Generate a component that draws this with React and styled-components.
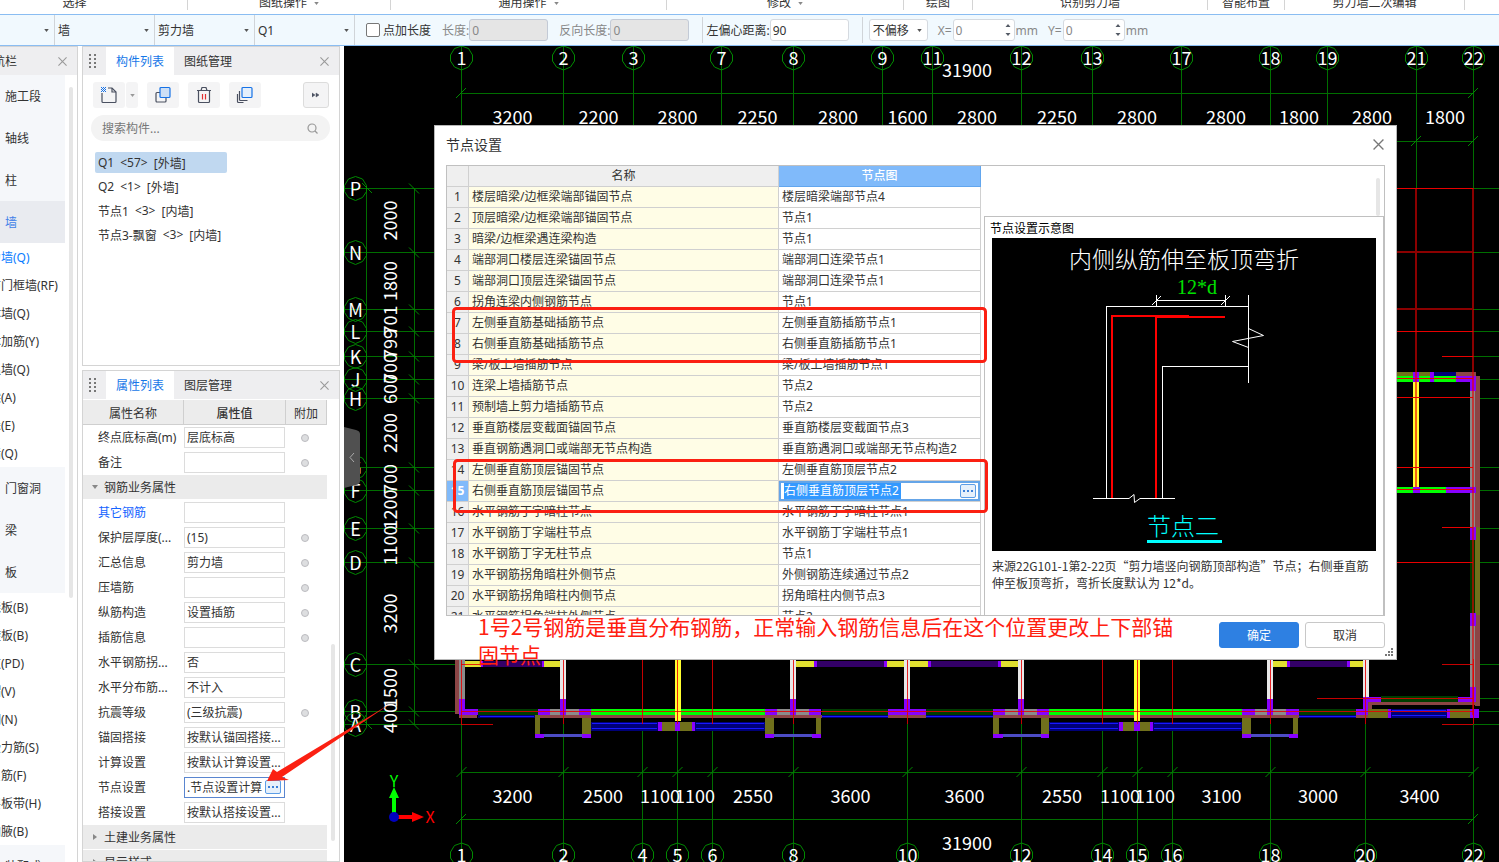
import React from 'react'
import styled, { createGlobalStyle, css } from 'styled-components'

const GlobalStyle = createGlobalStyle`
  * { box-sizing: border-box; }
  body {
    margin: 0;
    overflow: hidden;
    background: #fff;
    color: #333;
    font-family: "Noto Sans", "Noto Sans CJK SC", sans-serif;
    font-size: 12px;
  }
  button, input, select { font: inherit; color: inherit; margin: 0; }
`

const Page = styled.div`
  position: relative;
  display: flex;
  flex-direction: column;
  height: 100vh;
  overflow: hidden;
`

/* ---- ribbon ---- */

const Ribbon = styled.header`
  display: grid;
  grid-template-columns: 187fr 203fr 276fr 237fr 69fr 235fr 77fr 180fr 35fr;
  flex: none;
  height: 14px;
  overflow: hidden;
`

const RibbonGroup = styled.div`
  display: flex;
  justify-content: center;
  align-items: center;
  gap: 7px;
  min-width: 0;
  height: 10px;
  line-height: 16px;
  padding-bottom: 4px;
  padding-right: ${props => props.$clipped ? '38px' : '0'};
  white-space: nowrap;

  & + & { border-left: 1px solid #d4d4d4; }
`

const OptionBar = styled.div`
  display: flex;
  flex: none;
  align-items: center;
  height: 32px;
  background: #f1f9fe;
  border-top: 1px solid #8abdf2;
  border-bottom: 1px solid #8abdf2;
  white-space: nowrap;
`

const Picker = styled.span`
  display: flex;
  align-items: center;
  width: ${props => props.width};
  height: 30px;
  padding: 0 5px 0 3px;
  border-right: 1px solid #d0d4d8;

  select {
    flex: 1;
    min-width: 0;
    appearance: none;
    border: 0;
    padding: 0;
    background: transparent;
    outline: 0;
  }
`

const OffsetPicker = styled(Picker)`
  height: 22px;
  border: 1px solid #d5dae0;
  border-radius: 3px;
  background: #fff;
  padding: 0 5px 0 3px;
  margin: 0 10px 0 3px;
`

const CheckLabel = styled.label`
  display: flex;
  align-items: center;
  gap: 3px;
  margin: 0 11px;

  input {
    appearance: none;
    width: 14px;
    height: 14px;
    border: 1px solid #777;
    border-radius: 2px;
    background: #fff;
  }
`

const Field = styled.label`
  display: flex;
  align-items: center;
  margin-right: ${props => props.$gap || '10px'};
  color: ${props => props.$muted ? '#888' : '#333'};
`

const FieldBox = styled.input`
  width: 79px;
  height: 22px;
  padding: 0 2px;
  border: 1px solid #d5dae0;
  border-radius: 3px;
  background: #fff;

  &:disabled {
    border-color: #c3cad6;
    background: #e5e5e5;
  }
`

const Spin = styled.span`
  display: flex;
  align-items: center;
  width: 62px;
  height: 22px;
  margin: 0 1px;
  padding-right: 3px;
  border: 1px solid #d5dae0;
  border-radius: 3px;
  background: #fff;

  input {
    flex: 1;
    min-width: 0;
    height: 18px;
    border: 0;
    padding: 0 2px;
    background: transparent;
  }
`

const Divider = styled.span`
  width: 1px;
  height: 26px;
  margin-right: 3px;
  background: #d0d4d8;
`

/* ---- docks ---- */

const Body = styled.div`
  display: flex;
  flex: 1;
  min-height: 0;
`

const Nav = styled.nav`
  display: flex;
  flex-direction: column;
  flex: none;
  width: 78px;
  margin-right: 4px;
  border-right: 1px solid #d4d4d4;
  overflow: hidden;
  white-space: nowrap;
`

const NavHeader = styled.div`
  display: flex;
  flex: none;
  align-items: center;
  justify-content: space-between;
  height: 29px;
  border-top: 1px solid #d4d4d4;
  padding-right: 10px;
  background: #eeeef0;

  span { margin-left: -19px; }
`

const NavScroll = styled.div`
  display: flex;
  justify-content: space-between;
  padding-right: 4px;
`

const NavList = styled.div`
  width: 65px;
  overflow: hidden;
`

const NavItem = styled.button`
  display: block;
  width: 100%;
  height: 42px;
  border: 0;
  padding: 0 0 0 5px;
  text-align: left;
  background: ${props => props.$active ? '#e9ebf0' : '#f5f7fa'};
  color: ${props => props.$active ? '#3f7fe8' : '#333'};
`

const NavSubItem = styled.button`
  display: block;
  height: 28px;
  border: 0;
  padding: 0;
  margin-left: -23px;
  background: transparent;
  color: ${props => props.$active ? '#0a7cff' : '#333'};
`

const Thumb = styled.div`
  flex: none;
  width: 4px;
  height: ${props => props.$length}px;
  margin-top: ${props => props.$offset}px;
  border-radius: 2px;
  background: #e6e6e6;
`

const Dock = styled.aside`
  display: flex;
  flex-direction: column;
  flex: none;
  gap: 4px;
  width: 258px;
  margin-right: 4px;
`

const Panel = styled.section`
  display: flex;
  flex-direction: column;
  flex: ${props => props.$height ? `0 0 ${props.$height}` : '1'};
  min-height: 0;
  overflow: hidden;
  border: 1px solid #d4d4d4;
`

const TabBar = styled.div`
  display: flex;
  flex: none;
  align-items: center;
  height: 28px;
  padding: 0 10px 0 6px;
  background: #eeeef0;
`

const Tab = styled.button`
  height: 28px;
  border: 0;
  padding: 0 10px;
  background: ${props => props.$active ? '#fff' : 'transparent'};
  color: ${props => props.$active ? '#1677e8' : '#333'};
`

const IconButton = styled.button`
  display: flex;
  align-items: center;
  justify-content: center;
  border: 0;
  padding: 0;
  background: transparent;
`

const CloseButton = styled(IconButton)`
  margin-left: auto;
`

const Grip = styled.svg`
  margin-right: 10px;
`

const ToolBar = styled.div`
  display: flex;
  gap: 9px;
  padding: 7px 10px;
`

const Tool = styled(IconButton)`
  width: ${props => props.$slim ? '12px' : '32px'};
  height: 26px;
  border-radius: 3px;
  background: #f4f4f5;
`

const ToolGroup = styled.div`
  display: flex;
  gap: 1px;
`

const MoreTool = styled(Tool)`
  width: 26px;
  margin-left: auto;
  border: 1px solid #dcdcdc;
`

const Search = styled.label`
  display: flex;
  flex: none;
  align-items: center;
  height: 26px;
  margin: 0 9px 11px 8px;
  padding: 0 12px 0 11px;
  border-radius: 13px;
  background: #f3f3f3;

  input {
    flex: 1;
    min-width: 0;
    border: 0;
    padding: 0;
    background: transparent;
  }
  input::placeholder { color: #777; }
`

const PartList = styled.ul`
  list-style: none;
  margin: 0;
  padding: 0 12px;
`

const PartItem = styled.li`
  display: flex;
  align-items: center;
  gap: 6px;
  width: 132px;
  height: 21px;
  margin-bottom: 3px;
  padding-left: 3px;
  border-radius: 2px;
  white-space: nowrap;
  background: ${props => props.$active ? '#c0d8f0' : 'transparent'};
`

const PropsScroll = styled.div`
  display: flex;
  gap: 4px;
  padding-top: 1px;
`

const PropsTable = styled.table`
  width: 244px;
  table-layout: fixed;
  border-spacing: 0;
  white-space: nowrap;

  th {
    height: 25px;
    padding: 1px 0 0;
    font-weight: 400;
    background: #ececec;
    border-right: 1px solid #cfcfcf;
    border-bottom: 1px solid #cfcfcf;
  }
  th:nth-child(2) { font-weight: 500; }
  td {
    height: 25px;
    padding: 0 0 1px;
  }
  td:nth-child(3) {
    padding-right: 3px;
    text-align: center;
  }
`

const PropName = styled.label`
  padding-left: 15px;
  color: ${props => props.$link ? '#1464ff' : '#333'};
`

const PropValue = styled.span`
  display: flex;
  align-items: center;
  width: 101px;
  height: 21px;
  padding: 0 3px 0 2px;
  border: 1px solid ${props => props.$active ? '#5a86d0' : '#dcdcdc'};

  input {
    flex: 1;
    min-width: 0;
    height: 17px;
    border: 0;
    padding: 0;
    background: transparent;
  }
`

const GroupCell = styled.td`
  &&& {
    padding: 0 0 0 9px;
    background: #ebebeb;
    border-bottom: 1px solid #fff;
  }
  svg {
    margin-right: 6px;
    vertical-align: 2px;
  }
`

const Dot = styled.span`
  display: inline-block;
  width: 8px;
  height: 8px;
  border: 1px solid #bcbcc0;
  border-radius: 50%;
  background: #dddee0;
  vertical-align: middle;
`

const MoreDots = styled.button`
  display: flex;
  align-items: center;
  justify-content: center;
  flex: none;
  width: 16px;
  height: 14px;
  padding: 0;
  border: 1px solid #5c9de6;
  border-radius: 2px;
  background: #e6f0fb;
`

/* ---- drawing area ---- */

const Canvas = styled.main`
  position: relative;
  flex: 1;
  min-width: 0;
  overflow: hidden;
  background: #000;
`

const Plan = styled.svg`
  display: block;
  font-family: "Noto Sans CJK SC", sans-serif;
  font-size: 18px;
`

const Dialog = styled.section`
  position: absolute;
  left: 90px;
  top: 79px;
  width: 963px;
  display: flex;
  flex-direction: column;
  padding: 0 11px;
  background: #fff;
  border: 1px solid #b8b8b8;
`

const DialogTitle = styled.div`
  display: flex;
  align-items: center;
  justify-content: space-between;
  height: 39px;
  padding: 0 1px 3px 0;
  font-size: 14px;
`

const DialogBody = styled.div`
  display: flex;
  height: 451px;
  overflow: hidden;
  border: 1px solid #c0c0c0;
`

const NodeTable = styled.table`
  flex: none;
  width: 534px;
  height: max-content;
  table-layout: fixed;
  border-spacing: 0;
  white-space: nowrap;

  th, td {
    height: 21px;
    padding: 0 0 0 3px;
    line-height: 18px;
    border-right: 1px solid #d0d0d0;
    border-bottom: 1px solid #d0d0d0;
  }
  th {
    padding: 0;
    font-weight: 400;
    background: #efefef;
  }
  th:last-child {
    background: #80bafa;
    border-color: #62a6ee;
    color: #fff;
    font-weight: 500;
  }
`

const IndexCell = styled.td`
  && {
    padding: 0;
    text-align: center;
    background: #efefef;
    ${props => props.$active && css`
      background: #80bafa;
      color: #fff;
      font-weight: 700;
    `}
  }
`

const NameCell = styled.td`
  background: #fffde6;
`

const EditCell = styled.td`
  &&& { padding: 0; }
`

const Editor = styled.span`
  display: flex;
  align-items: center;
  justify-content: space-between;
  height: 20px;
  padding: 0 2px 0 3px;
  border: 2px solid #65a5e8;

  input {
    width: 117px;
    height: 16px;
    padding: 0;
    border: 0;
    background: #3399ff;
    color: #fff;
  }
`

const Preview = styled.div`
  display: flex;
  flex-direction: column;
  flex: 1;
  align-items: flex-end;
  padding-left: 3px;

  ${Thumb} { margin-right: 4px; }
`

const PreviewCard = styled.figure`
  width: 100%;
  flex: 1;
  margin: 0;
  padding: 3px 7px;
  border: 1px solid #c0c0c0;
  border-bottom: 0;

  h3 {
    margin: 0 0 0 -2px;
    font-size: 12px;
    font-weight: 400;
    line-height: 18px;
    color: #000;
  }
  svg { display: block; background: #000; }
  figcaption {
    padding-top: 6px;
    font-family: "Noto Sans CJK SC", sans-serif;
    line-height: 17px;
    color: #333;
  }
`

const DialogFooter = styled.footer`
  display: flex;
  justify-content: flex-end;
  gap: 6px;
  padding: 6px 0 11px;
`

const DialogButton = styled.button`
  width: 80px;
  height: 26px;
  border: 1px solid ${props => props.$primary ? '#2e80e2' : '#c8c8c8'};
  border-radius: 3px;
  background: ${props => props.$primary ? '#2e80e2' : '#fff'};
  color: ${props => props.$primary ? '#fff' : '#333'};
`

const ResizeGrip = styled.svg`
  position: absolute;
  right: 3px;
  bottom: 3px;
`

const Markup = styled.svg`
  position: absolute;
  left: 0;
  top: 0;
  pointer-events: none;
`

const Note = styled.p`
  position: absolute;
  left: 478px;
  top: 612px;
  width: 710px;
  margin: 0;
  font-family: "Noto Sans CJK SC", sans-serif;
  font-size: 21px;
  line-height: 28px;
  color: #ff2010;
`

/* ---- icons ---- */

const Caret = ({ color = '#555' }) => (
  <svg width="5" height="3" viewBox="0 0 6 4"><path d="M0 0h6L3 4z" fill={color} /></svg>
)

const Cross = ({ size = 9, color = '#999' }) => (
  <svg width={size} height={size} viewBox="0 0 10 10">
    <path d="M.5.5l9 9M9.5.5l-9 9" stroke={color} strokeWidth="1.2" />
  </svg>
)

const SpinArrows = () => (
  <svg width="6" height="14" viewBox="0 0 6 14">
    <path d="M.5 4h5L3 1zM.5 10h5L3 13z" fill="#555b66" />
  </svg>
)

const GripDots = () => (
  <Grip width="7" height="15" viewBox="0 0 7 15" fill="#777">
    {[0, 4, 8, 12].map(y => <path key={y} d={`M0 ${y}h2v2h-2zM5 ${y}h2v2h-2z`} />)}
  </Grip>
)

const Ellipsis = () => (
  <svg width="10" height="2" viewBox="0 0 10 2"><path d="M0 0h2v2h-2zM4 0h2v2h-2zM8 0h2v2h-2z" fill="#3b7fd8" /></svg>
)

const NewIcon = () => (
  <svg width="18" height="18" viewBox="0 0 18 18" fill="none">
    <path d="M2 7v8.500a1 1 0 0 0 1 1h12a1 1 0 0 0 1-1V6L12 2H8" stroke="#4a5060" strokeWidth="1.200" />
    <path d="M12 2v4h4" stroke="#4a5060" strokeWidth="1.200" />
    <path d="M1 1h1v1h-1zM3 1h1v1h-1zM5 1h1v1h-1zM2 2h1v1h-1zM4 2h1v1h-1zM1 3h1v1h-1zM3 3h1v1h-1zM5 3h1v1h-1zM2 4h1v1h-1zM4 4h1v1h-1zM1 5h1v1h-1zM3 5h1v1h-1zM5 5h1v1h-1z" fill="#1672e6" />
  </svg>
)

const CopyIcon = () => (
  <svg width="18" height="18" viewBox="0 0 18 18" strokeWidth="1.200">
    <rect x="2" y="6.500" width="10" height="9.500" rx="1" fill="#f4f4f5" stroke="#4a5060" />
    <rect x="6" y="1.500" width="10" height="10" rx="1" fill="#cddff5" stroke="#1672e6" />
  </svg>
)

const TrashIcon = () => (
  <svg width="18" height="18" viewBox="0 0 18 18" fill="none" strokeWidth="1.200">
    <path d="M2 4.500h14M6 4.500l1-3h4l1 3M3.500 4.500v11a1 1 0 0 0 1 1h9a1 1 0 0 0 1-1v-11" stroke="#4a5060" />
    <path d="M7.500 8v5.500M10.500 8v5.500" stroke="#e03030" />
  </svg>
)

const LayersIcon = () => (
  <svg width="18" height="18" viewBox="0 0 18 18" fill="none" strokeWidth="1.200">
    <path d="M1.500 8v7.500a1 1 0 0 0 1 1h5M3.500 5v8.500a1 1 0 0 0 1 1h7" stroke="#4a5060" />
    <rect x="6" y="1.500" width="10" height="10" rx="1" fill="#e4effc" stroke="#1672e6" />
  </svg>
)

/* ---- data ---- */

const ribbonGroups = [
  { name: '选择', clipped: true },
  { name: '图纸操作', menu: true },
  { name: '通用操作', menu: true },
  { name: '修改', menu: true },
  { name: '绘图' },
  { name: '识别剪力墙' },
  { name: '智能布置' },
  { name: '剪力墙二次编辑' },
]

const navItems = [
  { name: '施工段' },
  { name: '轴线' },
  { name: '柱' },
  { name: '墙', active: true, subs: ['剪力墙(Q)', '人防门框墙(RF)', '砌体墙(Q)', '砌体加筋(Y)', '保温墙(Q)', '暗梁(A)', '墙垛(E)', '幕墙(Q)'] },
  { name: '门窗洞' },
  { name: '梁' },
  { name: '板', subs: ['现浇板(B)', '螺旋板(B)', '坡道(PD)', '柱帽(V)', '板洞(N)', '板受力筋(S)', '板负筋(F)', '楼层板带(H)', '板加腋(B)'] },
  { name: '装配式' },
]

const parts = [
  ['Q1', '<57>', '[外墙]'],
  ['Q2', '<1>', '[外墙]'],
  ['节点1', '<3>', '[内墙]'],
  ['节点3-飘窗', '<3>', '[内墙]'],
]

const properties = [
  { name: '终点底标高(m)', value: '层底标高', dot: true },
  { name: '备注', value: '', dot: true },
  { group: '钢筋业务属性', open: true },
  { name: '其它钢筋', value: '', link: true },
  { name: '保护层厚度(...', value: '(15)', dot: true },
  { name: '汇总信息', value: '剪力墙', dot: true },
  { name: '压墙筋', value: '', dot: true },
  { name: '纵筋构造', value: '设置插筋', dot: true },
  { name: '插筋信息', value: '', dot: true },
  { name: '水平钢筋拐...', value: '否' },
  { name: '水平分布筋...', value: '不计入' },
  { name: '抗震等级', value: '(三级抗震)', dot: true },
  { name: '锚固搭接', value: '按默认锚固搭接...' },
  { name: '计算设置', value: '按默认计算设置...' },
  { name: '节点设置', value: '.节点设置计算', active: true },
  { name: '搭接设置', value: '按默认搭接设置...' },
  { group: '土建业务属性' },
  { group: '显示样式' },
]

const nodes = [
  ['楼层暗梁/边框梁端部锚固节点', '楼层暗梁端部节点4'],
  ['顶层暗梁/边框梁端部锚固节点', '节点1'],
  ['暗梁/边框梁遇连梁构造', '节点1'],
  ['端部洞口楼层连梁锚固节点', '端部洞口连梁节点1'],
  ['端部洞口顶层连梁锚固节点', '端部洞口连梁节点1'],
  ['拐角连梁内侧钢筋节点', '节点1'],
  ['左侧垂直筋基础插筋节点', '左侧垂直筋插筋节点1'],
  ['右侧垂直筋基础插筋节点', '右侧垂直筋插筋节点1'],
  ['梁/板上墙插筋节点', '梁/板上墙插筋节点1'],
  ['连梁上墙插筋节点', '节点2'],
  ['预制墙上剪力墙插筋节点', '节点2'],
  ['垂直筋楼层变截面锚固节点', '垂直筋楼层变截面节点3'],
  ['垂直钢筋遇洞口或端部无节点构造', '垂直筋遇洞口或端部无节点构造2'],
  ['左侧垂直筋顶层锚固节点', '左侧垂直筋顶层节点2'],
  ['右侧垂直筋顶层锚固节点', '右侧垂直筋顶层节点2'],
  ['水平钢筋丁字暗柱节点', '水平钢筋丁字暗柱节点1'],
  ['水平钢筋丁字端柱节点', '水平钢筋丁字端柱节点1'],
  ['水平钢筋丁字无柱节点', '节点1'],
  ['水平钢筋拐角暗柱外侧节点', '外侧钢筋连续通过节点2'],
  ['水平钢筋拐角暗柱内侧节点', '拐角暗柱内侧节点3'],
  ['水平钢筋拐角端柱外侧节点', '节点2'],
]

const topAxes = [[461, '1'], [563, '2'], [633, '3'], [721, '7'], [793, '8'], [882, '9'], [932, '11'], [1021, '12'], [1092, '13'], [1181, '17'], [1270, '18'], [1327, '19'], [1416, '21'], [1473, '22']]
const topDims = [3200, 2200, 2800, 2250, 2800, 1600, 2800, 2250, 2800, 2800, 1800, 2800, 1800]
const bottomAxes = [[461, '1'], [563, '2'], [642, '4'], [677, '5'], [712, '6'], [793, '8'], [907, '10'], [1021, '12'], [1102, '14'], [1137, '15'], [1172, '16'], [1270, '18'], [1365, '20'], [1473, '22']]
const bottomDims = [3200, 2500, 1100, 1100, 2550, 3600, 3600, 2550, 1100, 1100, 3100, 3000, 3400]
const sideAxes = [[188, 'P'], [252, 'N'], [309, 'M'], [331, 'L'], [356, 'K'], [379, 'J'], [398, 'H'], [467, 'G'], [490, 'F'], [528, 'E'], [562, 'D'], [664, 'C'], [711, 'B'], [724, 'A']]
const sideDims = [2000, 1800, 701, 799, 700, 600, 2200, 700, 1200, 1100, 3200, 1500, 400]

// wall pieces of the plan: colour, then [x, y, width, height]
const walls = [
  ['#8b4545', [[455, 659, 4, 55], [459, 715, 18, 3], [538, 715, 284, 3], [888, 715, 38, 3], [993, 715, 306, 3], [1356, 715, 12, 3], [1368, 702, 107, 3], [1368, 702, 4, 8], [1475, 376, 5, 151], [1456, 372, 20, 4], [1475, 615, 5, 91]]],
  ['#8b8b8b', [[459, 659, 6, 41], [550, 709, 29, 6], [777, 709, 32, 6], [1005, 709, 32, 6], [1255, 709, 31, 6], [1470, 391, 5, 136], [1470, 626, 5, 61]]],
  ['#003d00', [[478, 709, 60, 6], [822, 709, 66, 6], [926, 709, 67, 6], [1299, 709, 57, 6], [1381, 696, 77, 6], [1470, 540, 5, 73]]],
  ['#00ff00', [[591, 709, 174, 6], [1049, 709, 193, 6], [1397, 376, 59, 6], [1397, 487, 49, 6]]],
  ['#e0e030', [[465, 661, 17, 6], [544, 661, 17, 6], [796, 661, 18, 6], [887, 661, 41, 6], [1001, 661, 18, 6], [1273, 661, 14, 6], [1350, 661, 13, 6]]],
  ['#330068', [[482, 661, 62, 6], [816, 661, 70, 6], [930, 661, 70, 6], [1288, 661, 62, 6]]],
  ['#ffff30', [[675, 659, 6, 62], [1134, 659, 6, 62], [1413, 382, 6, 105]]],
  ['#e8e8e8', [[560, 659, 6, 41], [790, 659, 6, 41], [904, 659, 6, 41], [1018, 659, 6, 41], [1267, 659, 6, 41], [1363, 659, 6, 38]]],
  ['#000078', [[478, 715, 57, 3], [822, 715, 66, 3], [926, 715, 67, 3], [1299, 715, 57, 3], [591, 722, 68, 9], [695, 722, 70, 9], [1049, 722, 71, 9], [1153, 722, 89, 9], [1391, 709, 57, 9], [1434, 372, 22, 4]]],
  ['#70701c', [[535, 715, 5, 19], [582, 718, 9, 16], [662, 722, 30, 9], [765, 718, 9, 16], [816, 718, 5, 16], [993, 718, 6, 16], [1041, 718, 8, 16], [1123, 722, 27, 9], [1242, 718, 9, 16], [1293, 718, 5, 16], [1368, 709, 20, 9], [1450, 709, 20, 9], [1475, 527, 5, 88], [1397, 372, 34, 4]]],
  ['#4c4cc4', [[544, 734, 38, 3], [774, 734, 38, 3], [1003, 734, 38, 3], [1251, 734, 38, 3]]],
  ['#8800ff', [
    [459, 699, 6, 16], [459, 709, 19, 6], [538, 709, 12, 6], [560, 699, 6, 16], [579, 709, 12, 6],
    [535, 734, 9, 4], [582, 734, 9, 4], [658, 722, 4, 9], [675, 722, 5, 9], [692, 722, 3, 9],
    [765, 709, 12, 6], [790, 699, 6, 16], [809, 709, 12, 6], [765, 734, 9, 4], [812, 734, 9, 4],
    [888, 709, 38, 6], [904, 699, 6, 16], [993, 709, 12, 6], [1018, 699, 6, 16], [1037, 709, 12, 6],
    [993, 734, 10, 4], [1041, 734, 8, 4], [1119, 722, 4, 9], [1134, 722, 6, 9], [1150, 722, 3, 9],
    [1242, 709, 13, 6], [1267, 699, 6, 16], [1286, 709, 13, 6], [1242, 734, 9, 4], [1289, 734, 9, 4],
    [1356, 709, 12, 6], [1363, 697, 5, 18], [1363, 697, 18, 5], [1458, 697, 18, 5], [1470, 687, 6, 15],
    [1388, 709, 3, 9], [1447, 709, 3, 9], [1470, 709, 9, 9], [1470, 613, 6, 13], [1470, 527, 6, 13],
    [1456, 376, 20, 6], [1470, 376, 6, 15], [1413, 372, 6, 10], [1430, 372, 4, 10], [1413, 487, 7, 6],
    [1446, 487, 30, 6], [481, 661, 2, 6], [542, 661, 2, 6], [814, 661, 3, 6], [884, 661, 3, 6],
    [928, 661, 3, 6], [998, 661, 3, 6], [1287, 661, 3, 6], [1347, 661, 3, 6],
  ]],
]

const windowLines = [[480, 717, 534], [822, 717, 888], [926, 717, 993], [1299, 717, 1356], [592, 724, 657], [592, 729, 657], [696, 724, 764], [696, 729, 764], [1050, 724, 1118], [1050, 729, 1118], [1154, 724, 1241], [1154, 729, 1241], [1392, 711, 1446], [1392, 716, 1446]]

const Bubble = ({ x, y, name }) => (
  <g>
    <path
      d={`M${x} ${y - 12}l7 2.500l4 6.500v6l-4 6l-7 3l-7-3l-4-6v-6l4-6.500z`}
      fill="none"
      stroke="#008a00"
    />
    <text x={x} y={y + 7} textAnchor="middle" fill="#fff">{name}</text>
  </g>
)

const Tick = ({ x, y, flip }) => (
  <path d={flip ? `M${x - 5} ${y - 5}l10 10` : `M${x - 5} ${y + 5}l10 -10`} stroke="#008a00" />
)

const mid = (axes, i) => (axes[i][0] + axes[i + 1][0] + 1) / 2

const FloorPlan = () => (
  <Plan width="1155" height="816" viewBox="344 46 1155 816">
    <g stroke="#006e00" shapeRendering="crispEdges">
      {topAxes.map(([x]) => <path key={x} d={`M${x + .5} 46V188`} />)}
      {bottomAxes.map(([x]) => <path key={x} d={`M${x + .5} 724V862`} />)}
      {sideAxes.map(([y]) => <path key={y} d={`M344 ${y + .5}H461M1473 ${y + .5}H1499`} />)}
      <path d="M461 93.500H1473M1396 141.500H1473M461 772.500H1473M461 819.500H1473M366.500 188V724M414.500 188V724M1473 698.500H1499" />
    </g>
    {walls.map(([color, rects]) => (
      <g key={color} fill={color}>
        {rects.map(([x, y, w, h], i) => <rect key={i} x={x} y={y} width={w} height={h} />)}
      </g>
    ))}
    <path d={windowLines.map(([x, y, x2]) => `M${x} ${y - .5}H${x2}`).join('')} stroke="#1818ff" />
    <g stroke="#e80000" shapeRendering="crispEdges">
      {bottomAxes.map(([x]) => <path key={x} d={`M${x + .5} 659V724`} opacity=".85" />)}
      <path d="M461 711.500H1473M461 664.500H491M461 724.500H493M1442 724.500H1473M1442 664.500H1473M1317 698.500H1473" opacity=".85" />
      <path d="M1397 188.500H1473M1397 331.500H1473M1397 378.500H1473M1397 467.500H1473M1397 489.500H1473M1397 562.500H1473M1442 356.500H1473M1442 527.500H1473M1397 397.500H1473" />
      <path d="M1397 252H1473M1397 309H1473M1416 188V487M1473 188V715" strokeWidth="2" opacity=".6" />
    </g>
    {topAxes.map(([x, name]) => <Bubble key={name} x={x + .5} y={58} name={name} />)}
    {bottomAxes.map(([x, name]) => <Bubble key={name} x={x + .5} y={855} name={name} />)}
    {sideAxes.map(([y, name]) => <Bubble key={name} x={355.5} y={y + .5} name={name} />)}
    {bottomAxes.map(([x]) => <Tick key={x} x={x + .5} y={772} />)}
    {sideAxes.map(([y]) => <Tick key={y} x={414} y={y + .5} flip />)}
    <Tick x={461} y={93} />
    <Tick x={1473} y={93} />
    <Tick x={461} y={819} />
    <Tick x={1473} y={819} />
    <Tick x={1416} y={141} />
    <Tick x={1473} y={141} />
    <Tick x={367} y={188} flip />
    <Tick x={367} y={724} flip />
    <g fill="#fff" textAnchor="middle">
      {topDims.map((dim, i) => <text key={i} x={mid(topAxes, i)} y="124">{dim}</text>)}
      {bottomDims.map((dim, i) => <text key={i} x={mid(bottomAxes, i)} y="803">{dim}</text>)}
      {sideDims.map((dim, i) => (
        <text key={i} transform={`translate(397 ${mid(sideAxes, i)}) rotate(-90)`}>{dim}</text>
      ))}
      <text x="967" y="77">31900</text>
      <text x="967" y="850">31900</text>
    </g>
    <path d="M344 427l12 3q4 1 4 4v47q0 3-4 4l-12 3z" fill="#505050" />
    <path d="M354 453l-4 4.500l4 4.500" fill="none" stroke="#aaa" />
    <path d="M392 815V798h-3l5-11l5 11h-3v17z" fill="#00ff00" />
    <path d="M396 815h16v-3l12 5l-12 5v-3h-16z" fill="#ff0000" />
    <circle cx="394" cy="817" r="5" fill="#0000c0" />
    <g textAnchor="middle" fontSize="16">
      <text x="394" y="787" fill="#00ff00">Y</text>
      <text x="430" y="823" fill="#ff0000">X</text>
    </g>
  </Plan>
)

const NodeDrawing = () => (
  <svg width="384" height="313" viewBox="992 238 384 313" fill="none" stroke="#fff" fontFamily='"Noto Sans CJK SC", sans-serif'>
    <g stroke="none" textAnchor="middle">
      <text x="1184" y="268" fontSize="23" fontWeight="300" fill="#fff">内侧纵筋伸至板顶弯折</text>
      <text x="1197" y="294" fontSize="20" fontFamily='"Liberation Serif", serif' fill="#00e000">12*d</text>
      <text x="1183" y="535" fontSize="24" fontWeight="300" fill="#00ffff">节点二</text>
    </g>
    <g shapeRendering="crispEdges">
      <path d="M1106.500 498V306.500H1248M1248.500 295V383M1162.500 498V366.500H1248M1093 498.500H1129M1140 498.500H1175M1156.500 295V306M1225.500 295V306M1156 300.500H1225" />
      <path d="M1112 498V316H1189M1156 498V317H1225" stroke="#ff0000" strokeWidth="2" />
      <path d="M1147 541.500H1222" stroke="#00ffff" strokeWidth="3" />
    </g>
    <path d="M1152 305l9-9M1221 305l9-9M1248.500 328.500l15 7l-31 6l16 6M1129 498.500l5-4l.5 8l5.500-4" />
  </svg>
)

const PropRow = ({ item, id }) => {
  if (item.group) {
    return (
      <tr>
        <GroupCell colSpan="3">
          <svg width="6" height="6" viewBox="0 0 6 6">
            <path d={item.open ? 'M0 1h6L3 5z' : 'M1 0v6l4-3z'} fill="#888" />
          </svg>
          {item.group}
        </GroupCell>
      </tr>
    )
  }
  return (
    <tr>
      <td><PropName htmlFor={id} $link={item.link}>{item.name}</PropName></td>
      <td>
        <PropValue $active={item.active}>
          <input id={id} defaultValue={item.value} />
          {item.active && <MoreDots aria-label={item.name}><Ellipsis /></MoreDots>}
        </PropValue>
      </td>
      <td>{item.dot && <Dot />}</td>
    </tr>
  )
}

const ToolPicker = ({ label, value, width }) => (
  <Picker width={width}>
    <select aria-label={label} defaultValue={value}><option>{value}</option></select>
    <Caret />
  </Picker>
)

const OptionsBar = () => (
  <OptionBar>
    <ToolPicker label="楼层" value="" width="55px" />
    <ToolPicker label="类别" value="墙" width="100px" />
    <ToolPicker label="类型" value="剪力墙" width="100px" />
    <ToolPicker label="构件" value="Q1" width="100px" />
    <CheckLabel><input type="checkbox" />点加长度</CheckLabel>
    <Field $muted $gap="11px">长度:<FieldBox defaultValue="0" disabled /></Field>
    <Field $muted $gap="13px">反向长度:<FieldBox defaultValue="0" disabled /></Field>
    <Divider />
    <Field $gap="13px">左偏心距离:<FieldBox defaultValue="90" /></Field>
    <Divider />
    <OffsetPicker width="59px">
      <select aria-label="偏移" defaultValue="不偏移"><option>不偏移</option></select>
      <Caret />
    </OffsetPicker>
    <Field $muted>X=<Spin><input defaultValue="0" /><SpinArrows /></Spin>mm</Field>
    <Field $muted>Y=<Spin><input defaultValue="0" /><SpinArrows /></Spin>mm</Field>
  </OptionBar>
)

const NodeDialog = () => (
  <Dialog role="dialog" aria-label="节点设置">
    <DialogTitle>
      节点设置
      <IconButton aria-label="关闭"><Cross size={11} color="#777" /></IconButton>
    </DialogTitle>
    <DialogBody>
      <NodeTable>
        <colgroup><col width="22" /><col width="310" /><col width="202" /></colgroup>
        <thead>
          <tr><th /><th>名称</th><th>节点图</th></tr>
        </thead>
        <tbody>
          {nodes.map(([name, value], i) => (
            <tr key={name}>
              <IndexCell $active={i === 14}>{i + 1}</IndexCell>
              <NameCell>{name}</NameCell>
              {i === 14 ? (
                <EditCell>
                  <Editor>
                    <input aria-label={name} defaultValue={value} />
                    <MoreDots aria-label="选择节点"><Ellipsis /></MoreDots>
                  </Editor>
                </EditCell>
              ) : <td>{value}</td>}
            </tr>
          ))}
        </tbody>
      </NodeTable>
      <Preview>
        <Thumb $length={38} $offset={12} />
        <PreviewCard>
          <h3>节点设置示意图</h3>
          <NodeDrawing />
          <figcaption>来源22G101-1第2-22页“剪力墙竖向钢筋顶部构造”节点；右侧垂直筋伸至板顶弯折，弯折长度默认为 12*d。</figcaption>
        </PreviewCard>
      </Preview>
    </DialogBody>
    <DialogFooter>
      <DialogButton $primary>确定</DialogButton>
      <DialogButton>取消</DialogButton>
    </DialogFooter>
    <ResizeGrip width="8" height="8" viewBox="0 0 8 8">
      <path d="M6 0h2v2h-2zM3 3h2v2h-2zM6 3h2v2h-2zM0 6h2v2h-2zM3 6h2v2h-2zM6 6h2v2h-2z" fill="#777" />
    </ResizeGrip>
  </Dialog>
)

export default function App() {
  return (
    <Page>
      <GlobalStyle />
      <Ribbon>
        {ribbonGroups.map(group => (
          <RibbonGroup key={group.name} $clipped={group.clipped}>
            {group.name}
            {group.menu && <Caret color="#888" />}
          </RibbonGroup>
        ))}
        <RibbonGroup />
      </Ribbon>
      <OptionsBar />
      <Body>
        <Nav>
          <NavHeader><span>导航栏</span><IconButton aria-label="关闭"><Cross /></IconButton></NavHeader>
          <NavScroll>
            <NavList>
              {navItems.map(item => (
                <React.Fragment key={item.name}>
                  <NavItem $active={item.active}>{item.name}</NavItem>
                  {item.subs && item.subs.map((sub, i) => (
                    <NavSubItem key={sub} $active={item.active && i === 0}>{sub}</NavSubItem>
                  ))}
                </React.Fragment>
              ))}
            </NavList>
            <Thumb $length={511} $offset={12} />
          </NavScroll>
        </Nav>
        <Dock>
          <Panel $height="320px">
            <TabBar>
              <GripDots />
              <Tab $active>构件列表</Tab>
              <Tab>图纸管理</Tab>
              <CloseButton aria-label="关闭"><Cross /></CloseButton>
            </TabBar>
            <ToolBar>
              <ToolGroup>
                <Tool aria-label="新建"><NewIcon /></Tool>
                <Tool $slim aria-label="新建选项"><Caret color="#999" /></Tool>
              </ToolGroup>
              <Tool aria-label="复制"><CopyIcon /></Tool>
              <Tool aria-label="删除"><TrashIcon /></Tool>
              <Tool aria-label="层间复制"><LayersIcon /></Tool>
              <MoreTool aria-label="更多">
                <svg width="8" height="6" viewBox="0 0 8 6"><path d="M0 1v4l3-2zM4 1v4l3-2z" fill="#4a5060" stroke="#4a5060" strokeWidth=".5" /></svg>
              </MoreTool>
            </ToolBar>
            <Search>
              <input placeholder="搜索构件..." />
              <svg width="11" height="11" viewBox="0 0 11 11" fill="none" stroke="#999" strokeWidth="1.200">
                <circle cx="5" cy="5" r="4" /><path d="M8 8l2.500 2.500" />
              </svg>
            </Search>
            <PartList>
              {parts.map(([name, count, place], i) => (
                <PartItem key={name} $active={i === 0}>
                  <span>{name}</span><span>{count}</span><span>{place}</span>
                </PartItem>
              ))}
            </PartList>
          </Panel>
          <Panel>
            <TabBar>
              <GripDots />
              <Tab $active>属性列表</Tab>
              <Tab>图层管理</Tab>
              <CloseButton aria-label="关闭"><Cross /></CloseButton>
            </TabBar>
            <PropsScroll>
              <PropsTable>
                <colgroup><col width="101" /><col width="102" /><col width="41" /></colgroup>
                <thead>
                  <tr><th>属性名称</th><th>属性值</th><th>附加</th></tr>
                </thead>
                <tbody>
                  {properties.map((item, i) => <PropRow key={i} item={item} id={`prop-${i}`} />)}
                </tbody>
              </PropsTable>
              <Thumb $length={197} $offset={244} />
            </PropsScroll>
          </Panel>
        </Dock>
        <Canvas>
          <FloorPlan />
          <NodeDialog />
        </Canvas>
      </Body>
      <Markup width="1499" height="862" fill="none" stroke="#fb2012">
        <rect x="453.500" y="308.500" width="532" height="53" rx="3" strokeWidth="3" />
        <rect x="454.500" y="460.500" width="532" height="51" rx="3" strokeWidth="3" />
        <path d="M390 704L277 772L273 769L267 781L289 780L282 777z" fill="#fb2012" stroke="none" />
      </Markup>
      <Note>1号2号钢筋是垂直分布钢筋，正常输入钢筋信息后在这个位置更改上下部锚固节点</Note>
    </Page>
  )
}
